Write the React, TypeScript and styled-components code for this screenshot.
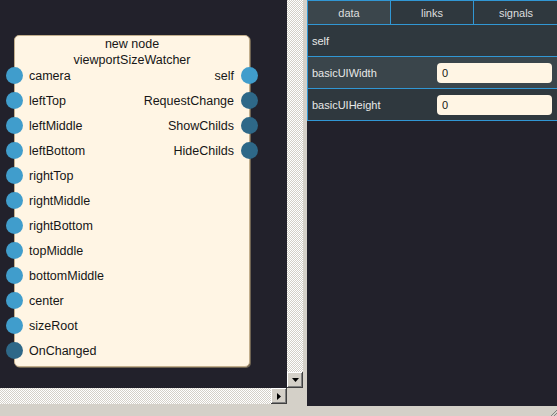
import styled, { createGlobalStyle } from "styled-components";

const GlobalStyle = createGlobalStyle`
  html, body {
    margin: 0;
    padding: 0;
    background: #d4d0c8;
  }
  * {
    box-sizing: border-box;
  }
`;

const inputs = [
  "camera",
  "leftTop",
  "leftMiddle",
  "leftBottom",
  "rightTop",
  "rightMiddle",
  "rightBottom",
  "topMiddle",
  "bottomMiddle",
  "center",
  "sizeRoot",
  "OnChanged",
];

const outputs = ["self", "RequestChange", "ShowChilds", "HideChilds"];

// ports that are signals get the darker blue
const signalPorts = ["OnChanged", "RequestChange", "ShowChilds", "HideChilds"];

const fields = [
  { name: "basicUIWidth", value: "0" },
  { name: "basicUIHeight", value: "0" },
];

const App = () => {
  return (
    <>
      <GlobalStyle />
      <Window>
        <EditorPane>
          <Canvas>
            <Node>
              <NodeHeader>
                <div>new node</div>
                <div>viewportSizeWatcher</div>
              </NodeHeader>
              {inputs.map((name, i) => (
                <PortRow key={name}>
                  <Port $side="left" $signal={signalPorts.includes(name)} />
                  <span>{name}</span>
                  {outputs[i] && <span>{outputs[i]}</span>}
                  {outputs[i] && (
                    <Port
                      $side="right"
                      $signal={signalPorts.includes(outputs[i])}
                    />
                  )}
                </PortRow>
              ))}
            </Node>
          </Canvas>
          <VTrack>
            <ScrollButton>
              <svg width="7" height="4" viewBox="0 0 7 4">
                <path d="M0 0h7L3.5 4z" fill="#000" />
              </svg>
            </ScrollButton>
          </VTrack>
          <HTrack>
            <ScrollButton>
              <svg width="4" height="7" viewBox="0 0 4 7">
                <path d="M0 0v7L4 3.5z" fill="#000" />
              </svg>
            </ScrollButton>
          </HTrack>
          <Corner />
        </EditorPane>

        <Inspector>
          <Tabs>
            <Tab $active>data</Tab>
            <Tab>links</Tab>
            <Tab>signals</Tab>
          </Tabs>
          <FieldRow>
            <FieldLabel>self</FieldLabel>
          </FieldRow>
          {fields.map((f, i) => (
            <FieldRow key={f.name} $alt={i % 2 === 0}>
              <FieldLabel>{f.name}</FieldLabel>
              <FieldInput defaultValue={f.value} />
            </FieldRow>
          ))}
        </Inspector>

        <Grip width="8" height="8" viewBox="0 0 8 8">
          <path d="M8 2L2 8M8 5L5 8" stroke="#808080" strokeWidth="1" />
        </Grip>
      </Window>
    </>
  );
};

export default App;

const Window = styled.div`
  position: relative;
  width: 557px;
  height: 416px;
  display: flex;
  gap: 4px;
  align-items: flex-start;
  background: #d4d0c8;
  font-family: "Liberation Sans", Arial, sans-serif;
`;

const EditorPane = styled.div`
  display: grid;
  grid-template-columns: 287px 16px;
  grid-template-rows: 388px 16px;
  flex-shrink: 0;
`;

const Canvas = styled.div`
  position: relative;
  background: #22212b;
  overflow: hidden;
`;

const checker = `
  background-color: #d4d0c8;
  background-image: repeating-conic-gradient(#ffffff 0 25%, #d4d0c8 0 50%);
  background-size: 2px 2px;
`;

const VTrack = styled.div`
  ${checker}
  display: flex;
  flex-direction: column;
  justify-content: flex-end;
`;

const HTrack = styled.div`
  ${checker}
  display: flex;
  justify-content: flex-end;
`;

const Corner = styled.div`
  background: #d4d0c8;
`;

const ScrollButton = styled.div`
  width: 16px;
  height: 16px;
  background: #d4d0c8;
  display: flex;
  align-items: center;
  justify-content: center;
  box-shadow: inset -1px -1px #404040, inset 1px 1px #ffffff,
    inset -2px -2px #808080, inset 2px 2px #d4d0c8;
`;

const Node = styled.div`
  position: absolute;
  left: 14px;
  top: 35px;
  width: 236px;
  height: 332px;
  background: #fff5e4;
  border: 1px solid #c2ae8c;
  border-radius: 5px;
  box-shadow: 1px 1px 0 #6e6352;
  color: #161616;
  font-size: 12.5px;
`;

const NodeHeader = styled.div`
  height: 27px;
  padding-top: 1px;
  line-height: 15.7px;
  text-align: center;
`;

const PortRow = styled.div`
  position: relative;
  height: 25px;
  display: flex;
  align-items: center;
  justify-content: space-between;
  padding: 0 15px 0 14px;
`;

const Port = styled.div<{ $side: "left" | "right"; $signal?: boolean }>`
  position: absolute;
  top: 4px;
  ${({ $side }) => ($side === "left" ? "left: -9px;" : "right: -9px;")}
  width: 17px;
  height: 17px;
  border-radius: 50%;
  background: ${({ $signal }) => ($signal ? "#2e6888" : "#409dcc")};
`;

const Inspector = styled.div`
  width: 250px;
  height: 406px;
  background: #22212b;
  flex-shrink: 0;
  font-size: 11px;
  color: #e4e4e4;
`;

const Tabs = styled.div`
  display: grid;
  grid-template-columns: 83px 83px 84px;
  height: 25px;
  border-top: 1px solid #3197d4;
  border-bottom: 1px solid #3197d4;
  border-left: 1px solid #3197d4;
`;

const Tab = styled.div<{ $active?: boolean }>`
  display: flex;
  align-items: center;
  justify-content: center;
  background: ${({ $active }) => ($active ? "#3b464c" : "#2f383e")};
  border-right: 1px solid #3197d4;
  color: #dedede;
  &:last-child {
    border-right: none;
  }
`;

const FieldRow = styled.div<{ $alt?: boolean }>`
  height: 32px;
  display: flex;
  align-items: center;
  justify-content: space-between;
  padding: 0 5px 0 4px;
  background: ${({ $alt }) => ($alt ? "#3a454b" : "#2f383e")};
  border-left: 1px solid #3197d4;
  border-bottom: 1px solid #3197d4;
`;

const FieldLabel = styled.span`
  color: #e8e8e8;
`;

const FieldInput = styled.input`
  width: 115px;
  height: 20px;
  border: none;
  border-radius: 4px;
  background: #fff5e4;
  padding: 0 5px;
  font-family: "Liberation Sans", Arial, sans-serif;
  font-size: 11px;
  color: #161616;
  outline: none;
`;

const Grip = styled.svg`
  position: absolute;
  right: 0;
  bottom: 0;
`;
